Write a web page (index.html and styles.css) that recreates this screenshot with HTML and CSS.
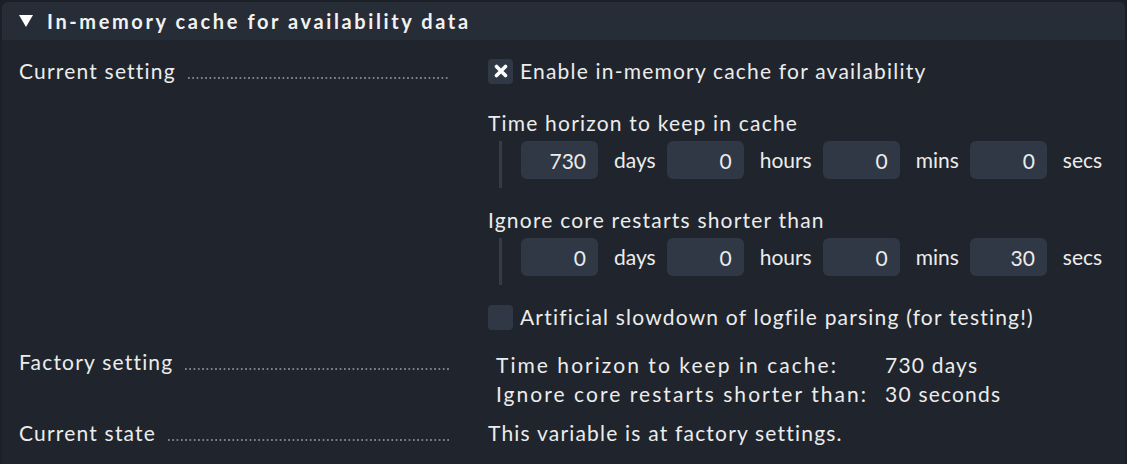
FILE: index.html
```html
<!DOCTYPE html>
<html lang="en">
  <head>
    <meta charset="UTF-8" />
    <title>In-memory cache for availability data</title>
    <link rel="stylesheet" href="styles.css">
  </head>
  <body>
    <div class="section">
      <div class="section__header">
        <span class="section__toggle"></span>
        <span class="section__title">In-memory cache for availability data</span>
      </div>

      <div class="row row--current">
        <div class="row__label"><span>Current setting</span><span class="dots"></span></div>
        <div class="row__value">
          <div class="checkline">
            <span class="checkbox checkbox--on">
              <svg width="14" height="14" viewBox="0 0 14 14"><path d="M2.5 2.5 L11.5 11.5 M11.5 2.5 L2.5 11.5" stroke="#fff" stroke-width="3.6" stroke-linecap="round"/></svg>
            </span>
            <span>Enable in-memory cache for availability</span>
          </div>

          <div class="subtitle">Time horizon to keep in cache</div>
          <div class="age">
            <input class="age__num" value="730" readonly><span class="age__unit">days</span>
            <input class="age__num" value="0" readonly><span class="age__unit">hours</span>
            <input class="age__num" value="0" readonly><span class="age__unit">mins</span>
            <input class="age__num" value="0" readonly><span class="age__unit">secs</span>
          </div>

          <div class="subtitle subtitle--second">Ignore core restarts shorter than</div>
          <div class="age">
            <input class="age__num" value="0" readonly><span class="age__unit">days</span>
            <input class="age__num" value="0" readonly><span class="age__unit">hours</span>
            <input class="age__num" value="0" readonly><span class="age__unit">mins</span>
            <input class="age__num" value="30" readonly><span class="age__unit">secs</span>
          </div>

          <div class="checkline checkline--last">
            <span class="checkbox"></span>
            <span>Artificial slowdown of logfile parsing (for testing!)</span>
          </div>
        </div>
      </div>

      <div class="row row--factory">
        <div class="row__label"><span>Factory setting</span><span class="dots"></span></div>
        <div class="row__value">
          <div class="factory">
            <span class="factory__key">Time horizon to keep in cache:</span><span>730 days</span>
            <span class="factory__key">Ignore core restarts shorter than:</span><span>30 seconds</span>
          </div>
        </div>
      </div>

      <div class="row row--state">
        <div class="row__label"><span>Current state</span><span class="dots"></span></div>
        <div class="row__value">This variable is at factory settings.</div>
      </div>
    </div>
  </body>
</html>
```

FILE: styles.css
```css
body {
  margin: 0;
  padding: 2px 2px 0 2px;
  background: #1b1f26;
  font-family: Lato, "Noto Sans", sans-serif;
  font-size: 21px;
  letter-spacing: 1.2px;
  color: #ececec;
  height: 462px;
  overflow: hidden;
}

.section {
  background: #20252d;
  border-radius: 6px 6px 0 0;
  height: 462px;
}

.section__header {
  height: 38px;
  background: #272d37;
  border-radius: 6px 6px 0 0;
  display: flex;
  align-items: center;
  padding-left: 17px;
}

.section__toggle {
  width: 0;
  height: 0;
  border-left: 7px solid transparent;
  border-right: 7px solid transparent;
  border-top: 12px solid #fff;
  margin-right: 14px;
}

.section__title {
  font-weight: bold;
  font-size: 20px;
  letter-spacing: 2.6px;
  color: #f2f2f2;
}

.row {
  display: flex;
  padding-left: 17px;
}

.row--current {
  padding-top: 18px;
}

.row__label {
  flex: 0 0 431px;
  margin-right: 38px;
  display: flex;
  align-items: baseline;
  height: 26px;
  line-height: 26px;
}

.dots {
  flex: 1;
  margin-left: 12px;
  height: 2px;
  background-image: linear-gradient(to right, #7a818b 2px, transparent 2px);
  background-size: 4.3px 2px;
  background-repeat: repeat-x;
}

.row__value {
  line-height: 26px;
}

.checkline {
  display: flex;
  align-items: center;
  height: 26px;
}

.checkline--last {
  margin-top: 19px;
}

.checkbox {
  flex: 0 0 25px;
  height: 25px;
  border-radius: 4px;
  background: #2f3844;
  display: flex;
  align-items: center;
  justify-content: center;
  margin-right: 7px;
}

.subtitle {
  margin-top: 26px;
}

.subtitle--second {
  margin-top: 19px;
}

.age {
  margin-top: 5px;
  margin-left: 11px;
  padding: 0 0 9px 19px;
  border-left: 3px solid #343c48;
  display: flex;
  align-items: center;
}

.age__num {
  width: 77px;
  height: 38px;
  box-sizing: border-box;
  border: none;
  border-radius: 6px;
  background: #2f3844;
  color: #ececec;
  font: inherit;
  letter-spacing: 0;
  text-align: right;
  padding: 0 12px 0 0;
  outline: none;
}

.age__unit {
  letter-spacing: 0;
  padding: 0 11px 0 16px;
}

.row--factory {
  margin-top: 19px;
}

.factory {
  display: grid;
  grid-template-columns: auto auto;
  column-gap: 17px;
  padding-left: 8px;
  line-height: 29px;
  margin-top: 1px;
}

.factory__key {
  letter-spacing: 2.05px;
}

.row--state {
  margin-top: 12px;
}
```
